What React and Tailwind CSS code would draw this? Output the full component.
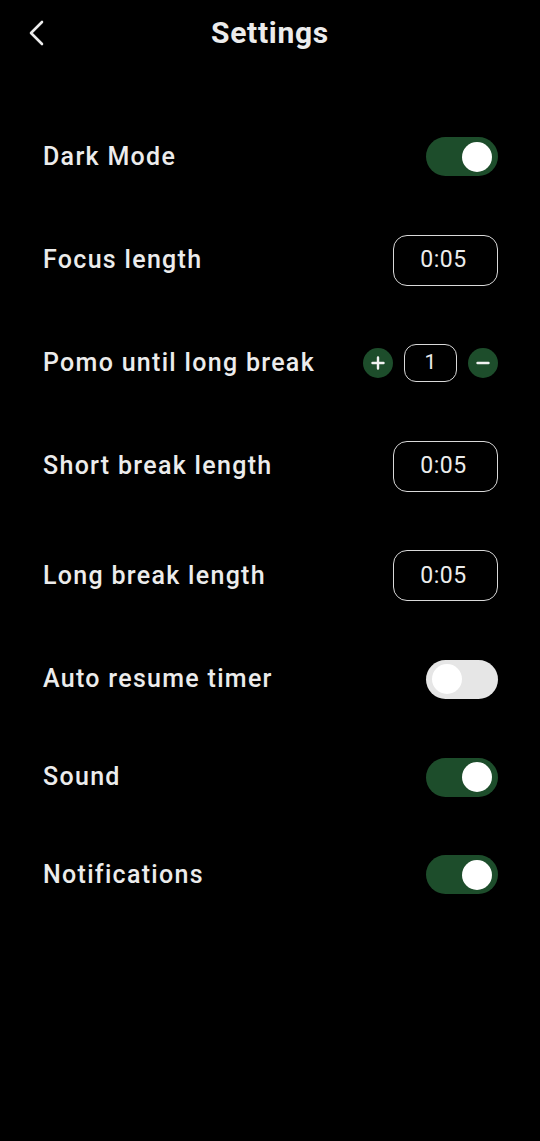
import { useState } from 'react';

function Toggle({ on, onClick }) {
  return (
    <button
      onClick={onClick}
      className={`relative flex h-[39px] w-[72px] items-center rounded-full px-[6px] ${
        on ? 'justify-end bg-[#1d4d2b]' : 'justify-start bg-[#e6e6e6]'
      }`}
    >
      <span className="block h-[30px] w-[30px] rounded-full bg-white" />
    </button>
  );
}

function TimeBox({ value }) {
  return (
    <div className="flex h-[51px] w-[105px] items-center justify-center rounded-[14px] border border-[#d9d9d9] pr-[4px] text-[23px] tracking-[0.6px] text-[#ececec]">
      {value}
    </div>
  );
}

function Label({ children }) {
  return <span className="text-[25px] font-medium leading-[28px] tracking-[1.3px]">{children}</span>;
}

export default function App() {
  const [darkMode, setDarkMode] = useState(true);
  const [autoResume, setAutoResume] = useState(false);
  const [sound, setSound] = useState(true);
  const [notifications, setNotifications] = useState(true);
  const [pomos, setPomos] = useState(1);

  return (
    <div
      className="min-h-[1141px] w-full bg-black text-[#ececec]"
      style={{ fontFamily: 'Roboto, "Noto Sans", sans-serif' }}
    >
      {/* Header */}
      <div className="relative flex h-[66px] items-center justify-center">
        <button className="absolute left-[26px] top-[19px]">
          <svg width="20" height="28" viewBox="0 0 20 28" fill="none" stroke="#ececec" strokeWidth="2.6" strokeLinecap="round" strokeLinejoin="round">
            <path d="M16 3 L5 14 L16 25" />
          </svg>
        </button>
        <h1 className="text-[30px] font-bold leading-none tracking-[0.7px]">Settings</h1>
      </div>

      {/* Rows */}
      <div className="flex flex-col gap-[58.6px] pl-[43px] pr-[42px] pt-[71px]">
        <div className="flex items-center justify-between">
          <Label>Dark Mode</Label>
          <Toggle on={darkMode} onClick={() => setDarkMode(!darkMode)} />
        </div>

        <div className="flex items-center justify-between">
          <Label>Focus length</Label>
          <TimeBox value="0:05" />
        </div>

        <div className="flex items-center justify-between">
          <Label>Pomo until long break</Label>
          <div className="flex items-center gap-[11px]">
            <button
              onClick={() => setPomos(pomos + 1)}
              className="flex h-[30px] w-[30px] items-center justify-center rounded-full bg-[#1d4d2b]"
            >
              <svg width="14" height="14" viewBox="0 0 14 14" stroke="#f2f2f2" strokeWidth="2.4" strokeLinecap="round">
                <path d="M7 1.5 V12.5 M1.5 7 H12.5" />
              </svg>
            </button>
            <div className="flex h-[38px] w-[53px] items-center justify-center rounded-[12px] border border-[#d9d9d9] text-[21px]">
              {pomos}
            </div>
            <button
              onClick={() => setPomos(Math.max(1, pomos - 1))}
              className="flex h-[30px] w-[30px] items-center justify-center rounded-full bg-[#1d4d2b]"
            >
              <svg width="14" height="14" viewBox="0 0 14 14" stroke="#f2f2f2" strokeWidth="2.4" strokeLinecap="round">
                <path d="M1.5 7 H12.5" />
              </svg>
            </button>
          </div>
        </div>

        <div className="flex items-center justify-between">
          <Label>Short break length</Label>
          <TimeBox value="0:05" />
        </div>

        <div className="flex items-center justify-between">
          <Label>Long break length</Label>
          <TimeBox value="0:05" />
        </div>

        <div className="flex items-center justify-between">
          <Label>Auto resume timer</Label>
          <Toggle on={autoResume} onClick={() => setAutoResume(!autoResume)} />
        </div>

        <div className="flex items-center justify-between">
          <Label>Sound</Label>
          <Toggle on={sound} onClick={() => setSound(!sound)} />
        </div>

        <div className="flex items-center justify-between">
          <Label>Notifications</Label>
          <Toggle on={notifications} onClick={() => setNotifications(!notifications)} />
        </div>
      </div>
    </div>
  );
}
